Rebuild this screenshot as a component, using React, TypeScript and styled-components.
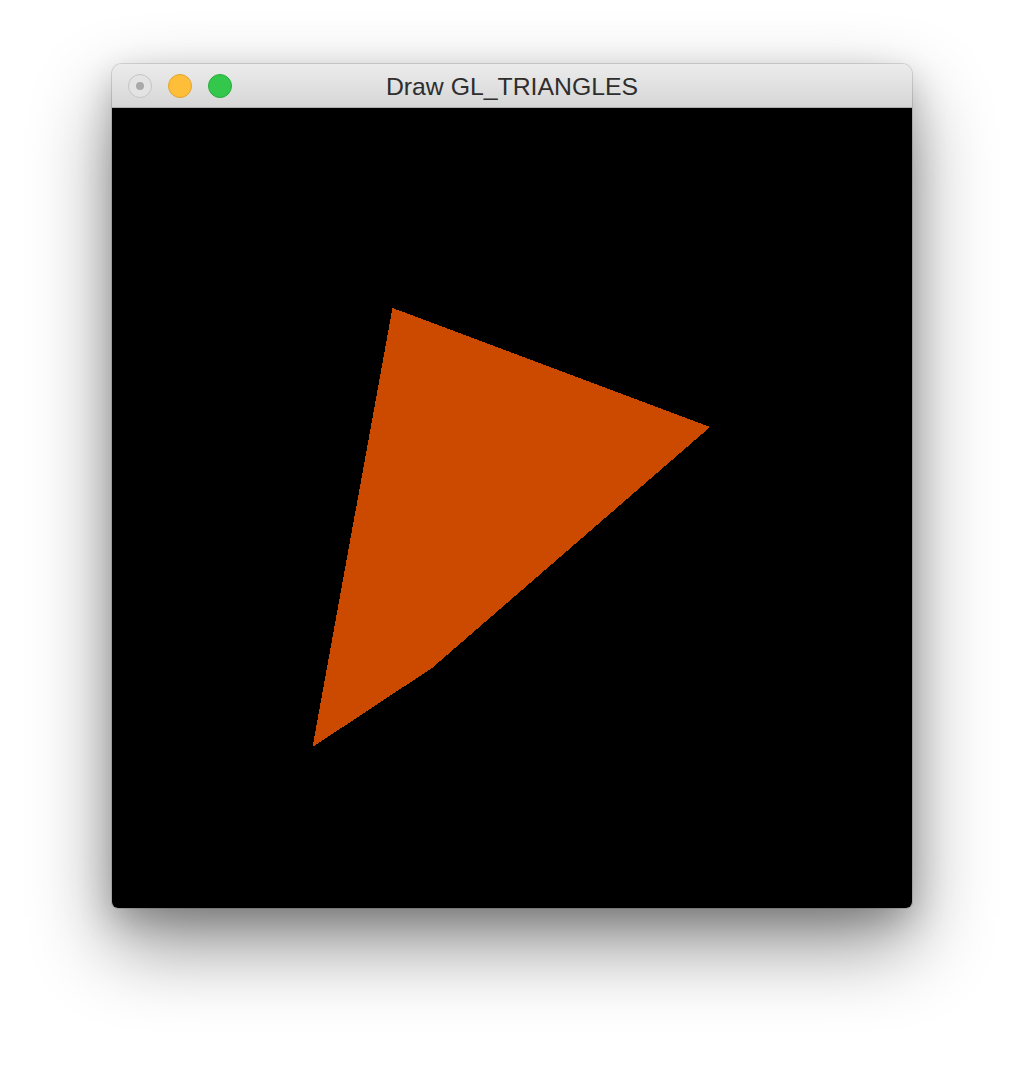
import React from "react";
import styled, { createGlobalStyle } from "styled-components";

const GlobalStyle = createGlobalStyle`
  html, body {
    margin: 0;
    padding: 0;
    background: #ffffff;
  }
  body {
    font-family: "Liberation Sans", Arial, sans-serif;
  }
`;

const Page = styled.div`
  width: 1024px;
  height: 1068px;
  display: flex;
  justify-content: center;
  align-items: flex-start;
  padding-top: 64px;
  box-sizing: border-box;
  overflow: hidden;
`;

const Window = styled.div`
  width: 800px;
  display: flex;
  flex-direction: column;
  border-radius: 10px 10px 6px 6px;
  overflow: hidden;
  box-shadow: 0 0 0 1px rgba(0, 0, 0, 0.12), 0 36px 80px rgba(0, 0, 0, 0.45),
    0 12px 34px rgba(0, 0, 0, 0.2);
`;

const TitleBar = styled.div`
  position: relative;
  height: 44px;
  box-sizing: border-box;
  display: flex;
  align-items: center;
  justify-content: center;
  padding-top: 2px;
  background: linear-gradient(#ececec, #d6d6d6);
  border-bottom: 1px solid #b0b0b0;
`;

const Lights = styled.div`
  position: absolute;
  left: 16px;
  top: 10px;
  display: flex;
  gap: 16px;
`;

const Light = styled.div<{ $fill: string; $edge: string }>`
  width: 24px;
  height: 24px;
  box-sizing: border-box;
  border-radius: 50%;
  background: ${(p) => p.$fill};
  border: 1px solid ${(p) => p.$edge};
  display: flex;
  align-items: center;
  justify-content: center;
`;

const Dot = styled.div`
  width: 8px;
  height: 8px;
  border-radius: 50%;
  background: #a9a9a9;
`;

const Title = styled.div`
  font-size: 24.8px;
  color: #2e2e2e;
`;

const Canvas = styled.svg`
  display: block;
  width: 800px;
  height: 800px;
  background: #000000;
`;

export default function App() {
  return (
    <>
      <GlobalStyle />
      <Page>
        <Window>
          <TitleBar>
            <Lights>
              <Light $fill="#e3e3e3" $edge="#c4c4c4">
                <Dot />
              </Light>
              <Light $fill="#febe3a" $edge="#e2a42c" />
              <Light $fill="#33c84b" $edge="#27ac3a" />
            </Lights>
            <Title>Draw GL_TRIANGLES</Title>
          </TitleBar>
          <Canvas viewBox="0 0 800 800" shapeRendering="crispEdges">
            <polygon
              points="280.5,200 598,319 320,560 200.5,639"
              fill="#cb4a00"
            />
          </Canvas>
        </Window>
      </Page>
    </>
  );
}
